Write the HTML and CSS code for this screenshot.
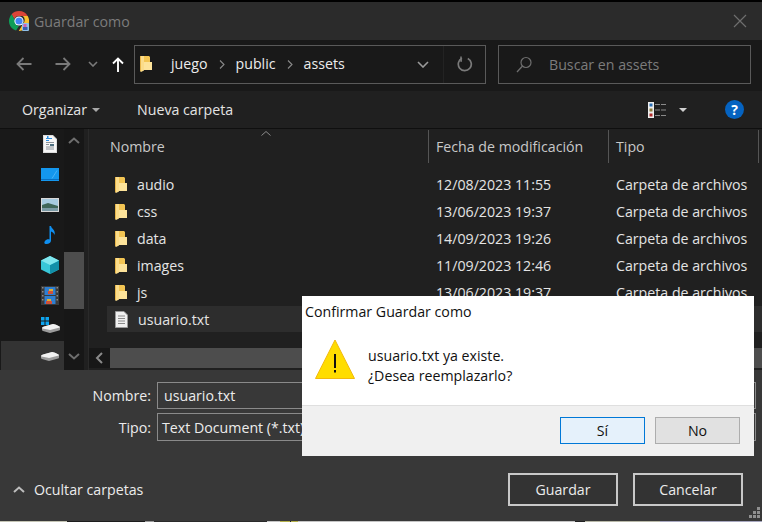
FILE: index.html
```html
<!DOCTYPE html>
<html lang="es">
<head>
  <meta charset="UTF-8">
  <title>Guardar como</title>
  <link rel="stylesheet" href="styles.css">
</head>
<body>
  <svg class="defs" width="0" height="0">
    <defs>
      <g id="folder-shape">
        <path d="M3 0h6l1 1v6H3z" fill="#f3c553"/>
        <path d="M3 6h9v8H3z" fill="#fde39a"/>
        <path d="M0 0h4v14.500L1 16l-1-1z" fill="#fbdc8a"/>
        <path d="M0 0h1v15H0z" fill="#e8b64a"/>
      </g>
      <g id="drive-shape">
        <path d="M0 4q0-1 2-1.500L11 0q1 0 3 .8l3.500 1.700q.5.300.5 1.500v1.500q0 .8-1 1l-8 2.300q-1 .2-2 0L1 7q-1-.3-1-1z" fill="#9b9b9b"/>
        <path d="M0 4q0-1 2-1.500L11 0q1 0 3 .8l3.500 1.700q.5.300.3 1L9 5.800q-1 .2-2 0L.5 4.500z" fill="#f2f2f2"/>
      </g>
    </defs>
  </svg>

  <div class="window">
    <!-- barra de titulo -->
    <div class="titlebar">
      <svg class="chrome-icon" width="20" height="20" viewBox="0 0 20 20">
        <path d="M10 0a10 10 0 0 1 8.700 5H10a5 5 0 0 0-4.700 3.300L2.600 3.300A10 10 0 0 1 10 0z" fill="#db4437"/>
        <path d="M2.600 3.300l4.400 7.700a3.500 3.500 0 0 0 3 4L7 19.600A10 10 0 0 1 2.600 3.300z" fill="#0f9d58"/>
        <path d="M18.700 5a10 10 0 0 1-8.900 15l4.400-7.500a5 5 0 0 0-.4-7.500z" fill="#fbc02d"/>
        <circle cx="10" cy="10" r="4.600" fill="#fff"/>
        <circle cx="10" cy="10" r="3.600" fill="#4285f4"/>
        <rect x="13" y="12" width="7" height="8" rx="1" fill="#8fc0ea"/>
        <rect x="14.500" y="13" width="3" height="3" fill="#d35fb0"/>
        <rect x="14" y="16" width="4.500" height="3" fill="#3a5fb0"/>
      </svg>
      <span class="title-text">Guardar como</span>
      <svg class="close-icon" width="14" height="14" viewBox="0 0 14 14">
        <path d="M1 1l12 12M13 1L1 13" stroke="#6e6e6e" stroke-width="1.200" fill="none"/>
      </svg>
    </div>

    <!-- navegacion -->
    <div class="navbar">
      <div class="nav-buttons">
        <svg class="nav-back" width="16" height="14" viewBox="0 0 16 14"><path d="M15.500 7H1.500M7.500 1l-6 6 6 6" stroke="#7a7a7a" stroke-width="1.800" fill="none"/></svg>
        <svg class="nav-forward" width="16" height="14" viewBox="0 0 16 14"><path d="M.5 7h14M8.500 1l6 6-6 6" stroke="#7a7a7a" stroke-width="1.800" fill="none"/></svg>
        <svg class="nav-recent" width="10" height="6" viewBox="0 0 10 6"><path d="M1 1l4 4 4-4" stroke="#7a7a7a" stroke-width="1.600" fill="none"/></svg>
        <svg class="nav-up" width="12" height="15" viewBox="0 0 12 15"><path d="M6 15V2M1 6.500L6 1.500l5 5" stroke="#fff" stroke-width="1.900" fill="none"/></svg>
      </div>
      <div class="address">
        <svg class="folder-path" width="12" height="16" viewBox="0 0 12 16"><use href="#folder-shape"/></svg>
        <span class="crumb">juego</span>
        <svg class="crumb-sep" width="6" height="9" viewBox="0 0 6 9"><path d="M1 .5l4 4-4 4" stroke="#8a8a8a" stroke-width="1.100" fill="none"/></svg>
        <span class="crumb">public</span>
        <svg class="crumb-sep" width="6" height="9" viewBox="0 0 6 9"><path d="M1 .5l4 4-4 4" stroke="#8a8a8a" stroke-width="1.100" fill="none"/></svg>
        <span class="crumb">assets</span>
        <svg class="address-drop" width="12" height="7" viewBox="0 0 12 7"><path d="M1 1l5 5 5-5" stroke="#9a9a9a" stroke-width="1.600" fill="none"/></svg>
        <div class="address-refresh">
          <svg width="16" height="16" viewBox="0 0 16 16"><path d="M10.800 2.400A6.500 6.500 0 1 1 5 2.300" stroke="#7a7a7a" stroke-width="1.700" fill="none"/><path d="M4 .5v4.500h1" stroke="#7a7a7a" stroke-width="1.500" fill="none"/></svg>
        </div>
      </div>
      <div class="search">
        <svg width="16" height="17" viewBox="0 0 16 17"><circle cx="10" cy="6.500" r="5" stroke="#6e6e6e" stroke-width="1.200" fill="none"/><path d="M6.500 10L1 16" stroke="#6e6e6e" stroke-width="1.300"/></svg>
        <span class="search-text">Buscar en assets</span>
      </div>
    </div>

    <!-- barra de comandos -->
    <div class="toolbar">
      <span class="tool-item organize">Organizar</span>
      <span class="caret"></span>
      <span class="tool-item new-folder">Nueva carpeta</span>
      <svg class="view-icon" width="18" height="16" viewBox="0 0 18 16">
        <rect width="6" height="16" fill="#eee"/>
        <rect x="1.500" y="1.500" width="3" height="3" fill="#2a6fb5"/>
        <rect x="1.500" y="6.500" width="3" height="3" fill="#8a7a3a"/>
        <rect x="1.500" y="11.500" width="3" height="3" fill="#b02a2a"/>
        <path d="M7 2.500h11M7 8h11M7 13.500h11" stroke="#8a8a8a" stroke-dasharray="5 1"/>
      </svg>
      <span class="caret view-caret"></span>
      <span class="help">?</span>
    </div>

    <!-- contenido -->
    <div class="content">
      <div class="sidebar">
        <div class="side-item">
          <svg width="14" height="18" viewBox="0 0 14 18"><path d="M0 0h10l4 4v14H0z" fill="#dcdcdc"/><path d="M1 1h8.500l3.500 3.500V17H1z" fill="#f7f7f7"/><path d="M3 7.500h8M3 12h8M3 14h8" stroke="#8c9299"/><path d="M3 3.500h6M3 5.500h3" stroke="#2f8fe0" stroke-width="1.200"/><path d="M4 1h1.500v3H4z" fill="#2f8fe0"/><path d="M7 9h4v2H7z" fill="#4d6f80"/><path d="M3 9.500h3" stroke="#8c9299"/></svg>
        </div>
        <div class="side-item">
          <svg width="18" height="13" viewBox="0 0 18 13"><rect width="18" height="13" fill="#1497ee"/><path d="M0 11.500h18" stroke="#0a6fc0"/><path d="M11 10.500l5-8" stroke="#62bdf5" stroke-width=".7"/></svg>
        </div>
        <div class="side-item">
          <svg width="18" height="14" viewBox="0 0 18 14"><rect width="18" height="14" fill="#d8d8d8"/><rect x="1" y="1" width="16" height="12" fill="#a7cbe0"/><path d="M1 7l6-2 10 3v5H1z" fill="#3f6659"/><path d="M1 10h16v3H1z" fill="#7a9aa5"/></svg>
        </div>
        <div class="side-item">
          <svg width="12" height="18" viewBox="0 0 12 18"><path d="M5.500 0h1.500c.5 3 5 4 3.500 9-.5-2-2-3-3.500-3.500V14.500c0 2-2 3.500-4.500 3.500S0 16.500 1 15s3-2 4.500-1.500z" fill="#0f8ff0"/></svg>
        </div>
        <div class="side-item">
          <svg width="18" height="18" viewBox="0 0 18 18"><path d="M9 0l9 4.500v9L9 18l-9-4.500v-9z" fill="#38c7d8"/><path d="M9 9l9-4.500v9L9 18z" fill="#128fa8"/><path d="M9 9L0 4.500 9 0l9 4.500z" fill="#7fe6ee"/></svg>
        </div>
        <div class="side-item">
          <svg width="18" height="19" viewBox="0 0 18 19"><rect width="18" height="19" fill="#3a3a3a"/><path d="M1 1h1.500v1.500H1zM1 5h1.500v1.500H1zM1 9h1.500v1.500H1zM1 13h1.500v1.500H1zM15.500 1H17v1.500h-1.500zM15.500 5H17v1.500h-1.500zM15.500 9H17v1.500h-1.500zM15.500 13H17v1.500h-1.500z" fill="#8a8a8a"/><rect x="3.500" y="1" width="11" height="8" fill="#2f7fd0"/><rect x="3.500" y="10" width="11" height="8" fill="#2f7fd0"/><path d="M8 3h4v2H8z" fill="#e0b030"/><path d="M7 5h5v3H7z" fill="#d0503a"/><path d="M6 13h4v2H6z" fill="#e0b030"/><path d="M5 15h6v3H5z" fill="#d0503a"/></svg>
        </div>
        <div class="side-item drive">
          <svg width="19" height="17" viewBox="0 0 19 17"><path d="M0 0h3.500v3.500H0zM4.500 0H8v3.500H4.500zM0 4.500h3.500V8H0zM4.500 4.500H8V8H4.500z" fill="#0ea5f0"/><use href="#drive-shape" x="1" y="7"/></svg>
        </div>
        <div class="side-item selected">
          <svg width="18" height="10" viewBox="0 0 18 10"><use href="#drive-shape"/></svg>
        </div>
      </div>

      <div class="side-scroll">
        <svg class="scroll-arrow" width="12" height="7" viewBox="0 0 12 7"><path d="M1 6l5-4.500L11 6" stroke="#6e6e6e" stroke-width="2" fill="none"/></svg>
        <div class="side-thumb"></div>
        <svg class="scroll-arrow" width="12" height="7" viewBox="0 0 12 7"><path d="M1 1l5 4.500L11 1" stroke="#6e6e6e" stroke-width="2" fill="none"/></svg>
      </div>

      <div class="files">
        <div class="file-head">
          <span class="col-name">Nombre</span>
          <span class="col-date">Fecha de modificación</span>
          <span class="col-type">Tipo</span>
          <svg class="sort-mark" width="10" height="5" viewBox="0 0 10 5"><path d="M.5 4.500L5 .5l4.500 4" stroke="#8a8a8a" fill="none"/></svg>
        </div>
        <div class="file-list">
          <div class="file-row">
            <span class="file-name"><svg class="folder" width="12" height="16" viewBox="0 0 12 16"><use href="#folder-shape"/></svg>audio</span>
            <span>12/08/2023 11:55</span>
            <span>Carpeta de archivos</span>
          </div>
          <div class="file-row">
            <span class="file-name"><svg class="folder" width="12" height="16" viewBox="0 0 12 16"><use href="#folder-shape"/></svg>css</span>
            <span>13/06/2023 19:37</span>
            <span>Carpeta de archivos</span>
          </div>
          <div class="file-row">
            <span class="file-name"><svg class="folder" width="12" height="16" viewBox="0 0 12 16"><use href="#folder-shape"/></svg>data</span>
            <span>14/09/2023 19:26</span>
            <span>Carpeta de archivos</span>
          </div>
          <div class="file-row">
            <span class="file-name"><svg class="folder" width="12" height="16" viewBox="0 0 12 16"><use href="#folder-shape"/></svg>images</span>
            <span>11/09/2023 12:46</span>
            <span>Carpeta de archivos</span>
          </div>
          <div class="file-row">
            <span class="file-name"><svg class="folder" width="12" height="16" viewBox="0 0 12 16"><use href="#folder-shape"/></svg>js</span>
            <span>13/06/2023 19:37</span>
            <span>Carpeta de archivos</span>
          </div>
          <div class="file-row active">
            <span class="file-name"><svg class="folder" width="13" height="17" viewBox="0 0 13 17"><path d="M.5.500h8.500l3.500 3.500v12.500H.5z" fill="#f0f0f0" stroke="#9a9a9a"/><path d="M3 5h7M3 7.500h7M3 10h7M3 12.500h7" stroke="#8a8a8a"/></svg>usuario.txt</span>
          </div>
        </div>
        <div class="h-scroll">
          <svg class="h-arrow" width="21" height="20" viewBox="0 0 21 20"><path d="M13 5l-5 5 5 5" stroke="#8a8a8a" stroke-width="2" fill="none"/></svg>
          <div class="h-thumb"></div>
        </div>
      </div>
    </div>

    <!-- parte inferior -->
    <div class="bottom">
      <div class="field">
        <label class="field-label">Nombre:</label>
        <div class="field-box name-box">usuario.txt</div>
      </div>
      <div class="field">
        <label class="field-label">Tipo:</label>
        <div class="field-box">Text Document (*.txt)</div>
      </div>
      <div class="bottom-actions">
        <div class="hide-folders">
          <svg width="12" height="7" viewBox="0 0 12 7"><path d="M1 6l5-4.500L11 6" stroke="#bdbdbd" stroke-width="2" fill="none"/></svg>
          <span>Ocultar carpetas</span>
        </div>
        <button class="dark-btn">Guardar</button>
        <button class="dark-btn">Cancelar</button>
      </div>
      <svg class="grip" width="12" height="12" viewBox="0 0 12 12"><path d="M8 0h3v3H8zM4 4h3v3H4zM8 4h3v3H8zM0 8h3v3H0zM4 8h3v3H4zM8 8h3v3H8z" fill="#8f8f8f"/></svg>
    </div>
    <div class="desktop-edge"></div>

    <!-- dialogo de confirmacion -->
    <div class="confirm">
      <div class="confirm-title">Confirmar Guardar como</div>
      <div class="confirm-body">
        <svg class="warn-icon" width="40" height="40" viewBox="0 0 40 40">
          <path d="M20 1L39.500 39.500H.5z" fill="#ffdd00" stroke="#f2b90d"/>
          <path d="M20 15l0 14" stroke="#111" stroke-width="2"/>
          <path d="M20 31v2.500" stroke="#111" stroke-width="2"/>
        </svg>
        <div class="confirm-text">
          <div>usuario.txt ya existe.</div>
          <div>¿Desea reemplazarlo?</div>
        </div>
      </div>
      <div class="confirm-foot">
        <button class="light-btn primary">Sí</button>
        <button class="light-btn">No</button>
      </div>
    </div>
  </div>
</body>
</html>
```

FILE: styles.css
```css
/* pagina */
* {
  box-sizing: border-box;
}

body {
  margin: 0;
  background: #000;
  font-family: "Open Sans", "Noto Sans", sans-serif;
  font-size: 14.2px;
  color: #e4e4e4;
  overflow: hidden;
}

.window {
  position: relative;
  width: 762px;
  height: 522px;
  padding-top: 2px;
  display: flex;
  flex-direction: column;
  overflow: hidden;
}

.defs {
  position: absolute;
}

/* barra de titulo */
.titlebar {
  height: 38px;
  background: #2b2b2b;
  display: flex;
  align-items: center;
  padding-left: 9px;
}

.title-text {
  margin-left: 5px;
  color: #7c7c7c;
}

.close-icon {
  margin-left: auto;
  margin-right: 15px;
}

/* navegacion */
.navbar {
  height: 51px;
  background: #191919;
  display: flex;
  align-items: center;
  padding-bottom: 3px;
}

.nav-buttons {
  width: 134px;
  display: flex;
  align-items: center;
  padding-left: 16px;
}

.nav-forward {
  margin-left: 23px;
}

.nav-recent {
  margin-left: 17px;
}

.nav-up {
  margin-left: 14px;
}

.address {
  width: 352px;
  height: 39px;
  border: 1px solid #5a5a5a;
  display: flex;
  align-items: center;
  padding-left: 5px;
}

.crumb {
  color: #ececec;
  margin-top: -1px;
}

.folder-path {
  margin-right: 19px;
}

.crumb-sep {
  margin: 0 11px 0 11px;
}

.address-drop {
  margin-left: auto;
  margin-right: 14px;
}

.address-refresh {
  width: 42px;
  height: 100%;
  border-left: 1px solid #232323;
  display: flex;
  align-items: center;
  justify-content: center;
}

.search {
  width: 253px;
  height: 39px;
  margin-left: 12px;
  border: 1px solid #5a5a5a;
  display: flex;
  align-items: center;
  padding-left: 17px;
}

.search-text {
  margin-left: 17px;
  color: #7c7c7c;
}

/* barra de comandos */
.toolbar {
  height: 38px;
  background: #202020;
  border-bottom: 1px solid #0f0f0f;
  display: flex;
  align-items: center;
  padding-left: 22px;
}

.caret {
  width: 0;
  height: 0;
  margin: 1px 0 0 5px;
  border-left: 4px solid transparent;
  border-right: 4px solid transparent;
  border-top: 4px solid #a8a8a8;
}

.new-folder {
  margin-left: 37px;
}

.view-icon {
  margin-left: auto;
}

.view-caret {
  margin-left: 13px;
  border-top-color: #d0d0d0;
}

.help {
  width: 19px;
  height: 19px;
  margin: 0 18px 0 38px;
  border-radius: 50%;
  background: #0563c1;
  color: #fff;
  font-size: 14px;
  font-weight: 700;
  line-height: 19px;
  text-align: center;
}

/* contenido */
.content {
  flex: 1;
  background: #202020;
  display: flex;
  min-height: 0;
}

.sidebar {
  width: 64px;
  background: #191919;
  display: flex;
  flex-direction: column;
  padding-left: 1px;
}

.side-item {
  height: 31px;
  display: flex;
  align-items: center;
  justify-content: center;
  padding-left: 35px;
}

.side-item.selected {
  height: 30px;
  background: #333;
  padding-top: 4px;
}

.side-scroll {
  width: 20px;
  background: #171717;
  display: flex;
  flex-direction: column;
  align-items: center;
  padding-top: 8px;
  margin-right: 4px;
}

.side-thumb {
  width: 20px;
  height: 57px;
  margin: 108px 0 44px;
  background: #4d4d4d;
}

.files {
  flex: 1;
  min-width: 0;
  display: flex;
  flex-direction: column;
  border-left: 1px solid #2a2a2a;
}

.file-head {
  position: relative;
  height: 33px;
  margin-top: 1px;
  display: grid;
  grid-template-columns: 340px 180px 150px;
  align-items: stretch;
  color: #c8c8c8;
}

.file-head span {
  display: flex;
  align-items: center;
  padding-left: 7px;
  border-right: 1px solid #555;
}

.file-head .col-name {
  padding-left: 21px;
}

.sort-mark {
  position: absolute;
  left: 172px;
  top: 1px;
}

.file-list {
  flex: 1;
  padding-top: 8px;
}

.file-row {
  height: 27px;
  display: grid;
  grid-template-columns: 321px 180px 1fr;
  align-items: center;
  margin-left: 18px;
  padding-left: 8px;
  color: #e4e4e4;
}

.file-row.active {
  height: 26px;
  background: #2d2d2d;
}

.file-name {
  display: flex;
  align-items: center;
}

.folder {
  margin-right: 10px;
  flex: none;
}

.h-scroll {
  height: 20px;
  margin-bottom: 2px;
  background: #4d4d4d;
  display: flex;
}

.h-arrow {
  background: #171717;
  flex: none;
}

.h-thumb {
  flex: 1;
}

/* parte inferior */
.bottom {
  position: relative;
  height: 151px;
  background: #383838;
  padding: 12px 6px 0 0;
}

.desktop-edge {
  height: 1px;
  background: linear-gradient(90deg,
    #c4c4b4 0 67px, #1c1c1c 67px 145px, #9a9a9a 145px 154px, #2a2a2a 154px 267px,
    #c4c4c4 267px 280px, #b4b04a 280px 290px, #222 290px 291px, #b4b04a 291px 298px,
    #c4c4c4 298px 575px, #222 575px 585px, #b8b8a8 585px 660px, #a8a8c0 660px 762px);
}

.field {
  display: flex;
  align-items: center;
  margin-bottom: 4px;
  height: 27px;
}

.field + .field {
  height: 28px;
}

.field-label {
  width: 151px;
  text-align: right;
  color: #ececec;
}

.field-box {
  flex: 1;
  height: 100%;
  margin-left: 6px;
  border: 1px solid #8a8a8a;
  padding-left: 4px;
  display: flex;
  align-items: center;
  color: #ececec;
}

.name-box {
  padding-left: 6px;
}

.bottom-actions {
  display: flex;
  align-items: center;
  margin-top: 32px;
  padding: 0 13px;
}

.hide-folders {
  display: flex;
  align-items: center;
  gap: 9px;
  color: #ececec;
  margin-right: auto;
}

.dark-btn {
  width: 110px;
  height: 33px;
  margin-left: 15px;
  background: #333;
  border: 2px solid #c8c8c8;
  color: #ececec;
  font: inherit;
}

.grip {
  position: absolute;
  right: 1px;
  bottom: 2px;
}

/* dialogo */
.confirm {
  position: absolute;
  left: 302px;
  top: 296px;
  width: 452px;
  height: 160px;
  background: #fff;
  color: #111;
  display: flex;
  flex-direction: column;
}

.confirm-title {
  padding: 6px 0 0 3px;
  height: 30px;
}

.confirm-body {
  height: 79px;
  display: flex;
  align-items: flex-start;
  padding: 13px 0 0 13px;
}

.confirm-text {
  margin-left: 13px;
  padding-top: 7px;
  line-height: 20px;
}

.confirm-foot {
  flex: 1;
  background: #f0f0f0;
  border-top: 1px solid #dfdfdf;
  display: flex;
  justify-content: flex-end;
  align-items: flex-start;
  gap: 10px;
  padding: 11px 14px 0 0;
}

.light-btn {
  width: 85px;
  height: 27px;
  background: #e1e1e1;
  border: 1px solid #adadad;
  color: #111;
  font: inherit;
}

.light-btn.primary {
  background: #e5f1fb;
  border-color: #0078d7;
}
```
